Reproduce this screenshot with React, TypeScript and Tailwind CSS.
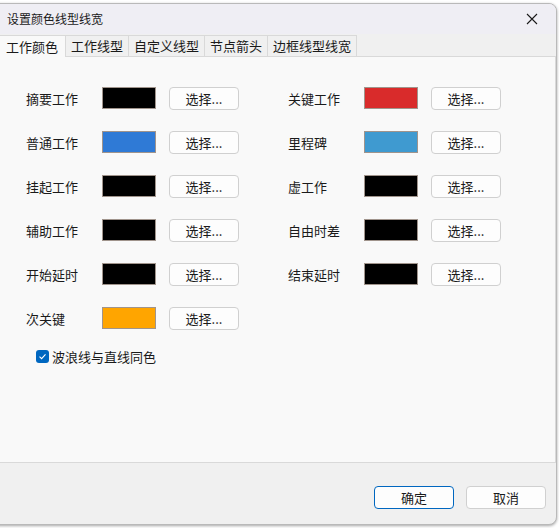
import React from "react";

const font = { fontFamily: '"Microsoft YaHei UI","Noto Sans CJK SC","Noto Sans",sans-serif' };

type Row = { label: string; color: string };

const left: Row[] = [
  { label: "摘要工作", color: "#000000" },
  { label: "普通工作", color: "#2f7ad6" },
  { label: "挂起工作", color: "#000000" },
  { label: "辅助工作", color: "#000000" },
  { label: "开始延时", color: "#000000" },
  { label: "次关键", color: "#ffa500" },
];
const right: Row[] = [
  { label: "关键工作", color: "#d92b2b" },
  { label: "里程碑", color: "#3f9ad0" },
  { label: "虚工作", color: "#000000" },
  { label: "自由时差", color: "#000000" },
  { label: "结束延时", color: "#000000" },
];

function ColorRow({ r }: { r: Row }) {
  return (
    <div className="flex items-center h-[22px]">
      <div className="w-[76px] text-[13px] text-[#1a1a1a] leading-none">{r.label}</div>
      <div className="w-[54px] h-[22px] border border-[#a0948c]" style={{ backgroundColor: r.color }} />
      <button className="ml-[13px] w-[70px] h-[23px] rounded-[4px] border border-[#d0d0d0] bg-[#fdfdfd] text-[13px] text-[#1a1a1a] leading-none flex items-center justify-center">
        选择...
      </button>
    </div>
  );
}

const tabs = ["工作颜色", "工作线型", "自定义线型", "节点箭头", "边框线型线宽"];

export default function App() {
  return (
    <div className="w-[559px] h-[528px] bg-white overflow-hidden relative" style={font}>
      <div className="absolute left-[-10px] top-[3px] w-[567px] h-[522px] rounded-[8px] bg-[#f0f0f0] border border-[#b9b9b9] shadow-[0_1px_3px_rgba(0,0,0,0.35)] flex flex-col overflow-hidden">
        {/* title bar */}
        <div className="h-[30px] bg-[#efeef4] flex items-center pl-[16px] pr-[18px] shrink-0">
          <span className="text-[12px] text-[#1a1a1a]">设置颜色线型线宽</span>
          <span className="ml-auto">
            <svg width="12" height="12" viewBox="0 0 12 12">
              <path d="M1 1L11 11M11 1L1 11" stroke="#1a1a1a" strokeWidth="1.1" />
            </svg>
          </span>
        </div>
        {/* tabs */}
        <div className="h-[22px] flex items-end pl-[9px] shrink-0">
          {tabs.map((t, i) =>
            i === 0 ? (
              <div key={t} className="h-[22px] pl-[6px] pr-[7px] bg-[#f9f9f9] border-t border-r border-[#d9d9d9] text-[13px] text-[#1a1a1a] flex items-center relative z-10 -mb-px">
                {t}
              </div>
            ) : (
              <div key={t} className="h-[21px] px-[5px] bg-[#f0f0f0] border-t border-r border-[#d9d9d9] text-[13px] text-[#1a1a1a] flex items-center">
                {t}
              </div>
            )
          )}
        </div>
        {/* panel */}
        <div className="ml-[8px] w-[557px] h-[407px] bg-[#f9f9f9] border border-[#d9d9d9] shrink-0 pt-[30px] pl-[26px]">
          <div className="flex">
            <div className="w-[262px] flex flex-col gap-[22px]">
              {left.map((r) => (
                <ColorRow key={r.label} r={r} />
              ))}
            </div>
            <div className="flex flex-col gap-[22px]">
              {right.map((r) => (
                <ColorRow key={r.label} r={r} />
              ))}
            </div>
          </div>
          <div className="flex items-center mt-[18px] ml-[10px]">
            <div className="w-[13px] h-[13px] rounded-[3px] bg-[#0067c0] flex items-center justify-center">
              <svg width="9" height="9" viewBox="0 0 9 9">
                <path d="M1.5 4.7L3.6 6.7L7.5 2.4" stroke="white" strokeWidth="1.1" fill="none" />
              </svg>
            </div>
            <span className="ml-[3px] text-[13px] text-[#1a1a1a]">波浪线与直线同色</span>
          </div>
        </div>
        {/* footer */}
        <div className="flex justify-end pr-[10px] pt-[23px] gap-[12px]">
          <button className="w-[80px] h-[23px] rounded-[4px] border border-[#0067c0] bg-[#fdfdfd] text-[13px] text-[#1a1a1a] flex items-center justify-center">
            确定
          </button>
          <button className="w-[80px] h-[23px] rounded-[4px] border border-[#d0d0d0] bg-[#fdfdfd] text-[13px] text-[#1a1a1a] flex items-center justify-center">
            取消
          </button>
        </div>
      </div>
    </div>
  );
}
